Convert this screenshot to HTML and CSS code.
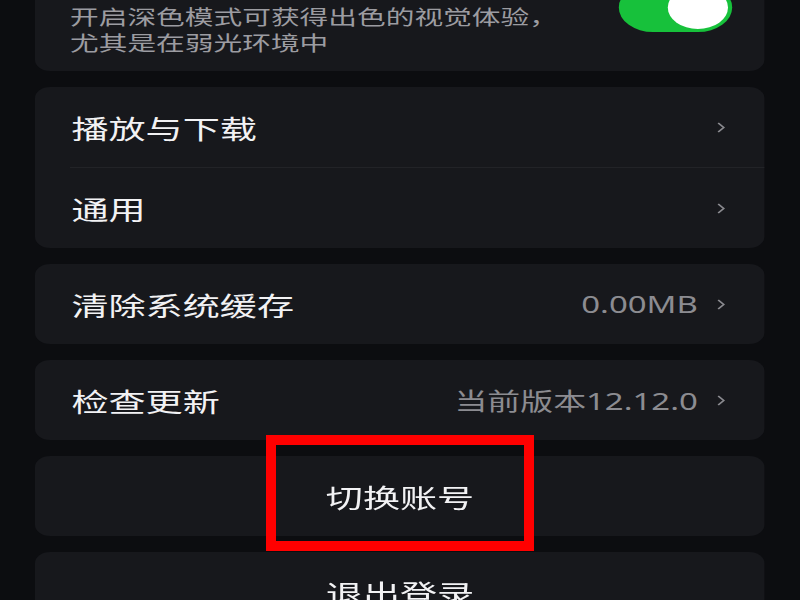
FILE: index.html
```html
<!DOCTYPE html>
<html lang="zh-CN">
<head>
    <meta charset="UTF-8">
    <meta name="viewport" content="width=device-width, initial-scale=1.0">
    <title>设置</title>
    <link rel="stylesheet" href="styles.css">
</head>
<body>
    <div class="screen">
        <div class="settings">
            <section class="card card-dark">
                <div class="dark-text">
                    <div class="dark-title">深色模式</div>
                    <p class="dark-desc">开启深色模式可获得出色的视觉体验，<br>尤其是在弱光环境中</p>
                </div>
                <div class="switch on"><span class="knob"></span></div>
            </section>

            <section class="card">
                <div class="row">
                    <span class="label">播放与下载</span>
                    <svg class="arrow" viewBox="0 0 6 11"><polyline points="1,1 5,5.5 1,10"/></svg>
                </div>
                <div class="divider"></div>
                <div class="row">
                    <span class="label">通用</span>
                    <svg class="arrow" viewBox="0 0 6 11"><polyline points="1,1 5,5.5 1,10"/></svg>
                </div>
            </section>

            <section class="card">
                <div class="row">
                    <span class="label">清除系统缓存</span>
                    <span class="value">0.00MB</span>
                    <svg class="arrow" viewBox="0 0 6 11"><polyline points="1,1 5,5.5 1,10"/></svg>
                </div>
            </section>

            <section class="card">
                <div class="row">
                    <span class="label">检查更新</span>
                    <span class="value">当前版本12.12.0</span>
                    <svg class="arrow" viewBox="0 0 6 11"><polyline points="1,1 5,5.5 1,10"/></svg>
                </div>
            </section>

            <section class="card">
                <div class="row row-center">
                    <span class="label">切换账号</span>
                </div>
            </section>

            <section class="card">
                <div class="row row-center">
                    <span class="label">退出登录</span>
                </div>
            </section>
        </div>

        <!-- annotation drawn over the screenshot -->
        <div class="highlight"></div>
    </div>
</body>
</html>
```

FILE: styles.css
```css
body {
    margin: 0;
    background-color: #0c0d10;
    font-family: "Noto Sans", "Noto Sans CJK SC", sans-serif;
    color: #f2f2f4;
}

.screen {
    position: relative;
    width: 800px;
    height: 600px;
    overflow: hidden;
}

/* the capture is stretched sideways, so lay out narrow and widen */
.settings {
    width: 571.43px;
    box-sizing: border-box;
    padding: 0 25px;
    margin-top: -62px;
    display: flex;
    flex-direction: column;
    gap: 16px;
    transform: scaleX(1.4);
    transform-origin: 0 0;
}

.card {
    background-color: #17181c;
    border-radius: 11px;
}

.card-dark {
    display: flex;
    align-items: center;
    justify-content: space-between;
    padding: 20px 23px 15px 25px;
}

.dark-title {
    font-size: 26px;
    line-height: 34px;
    margin-bottom: 12px;
}

.dark-desc {
    margin: 0;
    font-size: 20.5px;
    line-height: 26px;
    color: #9c9ca1;
}

.switch {
    width: 81px;
    height: 49px;
    border-radius: 25px;
    background-color: #e5e5ea;
    display: flex;
    align-items: center;
    padding: 0 3px;
    box-sizing: border-box;
}

.switch.on {
    background-color: #17c13b;
    justify-content: flex-end;
}

.knob {
    width: 43px;
    height: 43px;
    border-radius: 50%;
    background-color: #fff;
}

.row {
    height: 80px;
    display: flex;
    align-items: center;
    padding: 0 28px 0 26px;
}

.row-center {
    justify-content: center;
    padding: 0;
}

.label {
    flex: 1;
    font-size: 26.5px;
}

.row-center .label {
    flex: none;
}

.value {
    font-size: 23.5px;
    color: #8c8c91;
    margin-right: 14px;
}

.arrow {
    width: 6px;
    height: 11px;
    fill: none;
    stroke: #8a8a8f;
    stroke-width: 1.3;
}

.divider {
    height: 1px;
    margin-left: 25px;
    background-color: #222327;
}

.highlight {
    position: absolute;
    left: 266px;
    top: 435px;
    width: 268px;
    height: 116px;
    box-sizing: border-box;
    border: 10px solid #ff0000;
}
```
